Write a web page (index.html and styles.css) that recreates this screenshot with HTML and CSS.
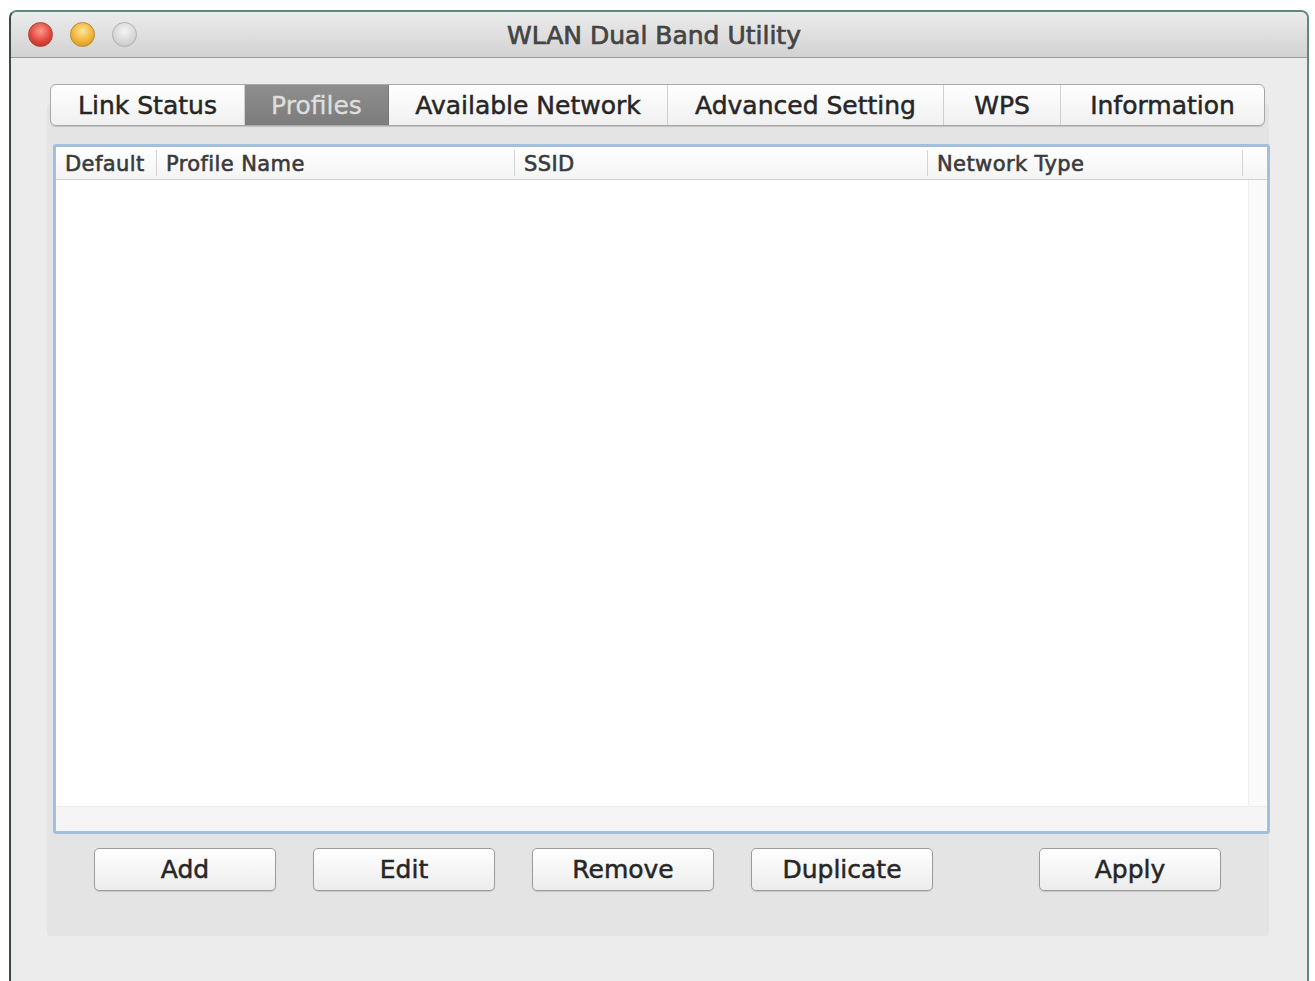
FILE: index.html
```html
<!DOCTYPE html>
<html lang="en">

<head>
    <meta charset="UTF-8">
    <title>WLAN Dual Band Utility</title>
    <link rel="stylesheet" href="styles.css">
</head>

<body>
    <div class="window">
        <div class="titlebar">
            <div class="lights">
                <span class="light red"></span>
                <span class="light yellow"></span>
                <span class="light gray"></span>
            </div>
            <div class="title">WLAN Dual Band Utility</div>
        </div>

        <div class="content">
            <div class="tabs">
                <div class="tab t1">Link Status</div>
                <div class="tab t2 active">Profiles</div>
                <div class="tab t3">Available Network</div>
                <div class="tab t4">Advanced Setting</div>
                <div class="tab t5">WPS</div>
                <div class="tab t6">Information</div>
            </div>

            <div class="panel">
                <div class="table">
                    <div class="thead">
                        <div class="th c1">Default</div>
                        <div class="th c2">Profile Name</div>
                        <div class="th c3">SSID</div>
                        <div class="th c4">Network Type</div>
                        <div class="th c5"></div>
                    </div>
                    <div class="tbody">
                        <div class="rows"></div>
                        <div class="vscroll"></div>
                    </div>
                    <div class="hscroll"></div>
                </div>

                <div class="actions">
                    <button class="btn">Add</button>
                    <button class="btn">Edit</button>
                    <button class="btn">Remove</button>
                    <button class="btn">Duplicate</button>
                    <button class="btn apply">Apply</button>
                </div>
            </div>
        </div>
    </div>
</body>

</html>
```

FILE: styles.css
```css
* {
    margin: 0;
    padding: 0;
    box-sizing: border-box;
}

body {
    background-color: #ffffff;
    font-family: "DejaVu Sans", "Liberation Sans", sans-serif;
    color: #333333;
}

.window {
    margin: 10px 0 0 9px;
    width: 1300px;
    height: 972px;
    border: 2px solid #5e8a78;
    border-left-color: #3a4a44;
    border-bottom: none;
    border-radius: 8px 8px 0 0;
    background-color: #ececec;
    display: flex;
    flex-direction: column;
    overflow: hidden;
}

.titlebar {
    height: 46px;
    background: linear-gradient(#ececec, #d2d2d2);
    border-bottom: 1px solid #9a9a9a;
    display: flex;
    align-items: center;
}

.lights {
    display: flex;
    gap: 17px;
    padding-left: 17px;
    width: 200px;
}

.light {
    width: 25px;
    height: 25px;
    border-radius: 50%;
    display: inline-block;
}

.red {
    background: radial-gradient(circle at 50% 35%, #ff9a90, #e0463c 55%, #b02a22);
    border: 1px solid #a8443c;
}

.yellow {
    background: radial-gradient(circle at 50% 35%, #ffe79a, #f0b43a 55%, #c88a1c);
    border: 1px solid #b98a30;
}

.gray {
    background: radial-gradient(circle at 50% 35%, #f4f4f4, #d6d6d6 60%, #bdbdbd);
    border: 1px solid #b0b0b0;
}

.title {
    flex: 1;
    text-align: center;
    font-size: 25px;
    color: #444444;
    -webkit-text-stroke: 0.7px #444444;
    padding-right: 210px;
    padding-top: 2px;
}

.content {
    flex: 1;
    padding: 26px 38px 0 36px;
    display: flex;
    flex-direction: column;
}

.tabs {
    display: flex;
    height: 42px;
    margin-left: 3px;
    margin-right: 4px;
    margin-bottom: -22px;
    background: linear-gradient(#ffffff, #f0f0f0);
    border: 1px solid #a8a8a8;
    border-radius: 6px;
    box-shadow: 0 1px 1px rgba(0, 0, 0, 0.15);
    position: relative;
    z-index: 1;
    overflow: hidden;
}

.tab {
    display: flex;
    align-items: center;
    justify-content: center;
    font-size: 25px;
    color: #262626;
    -webkit-text-stroke: 0.5px #262626;
    border-right: 1px solid #d0d0d0;
}

.tab:last-child {
    border-right: none;
}

.t1 { width: 194px; }
.t2 { width: 144px; }
.t3 { width: 279px; }
.t4 { width: 276px; }
.t5 { width: 117px; }
.t6 { flex: 1; }

.tab.active {
    background: linear-gradient(#8e8e8e, #7c7c7c);
    color: #dedede;
    -webkit-text-stroke: 0.3px #dedede;
    border-right-color: #777777;
}

.panel {
    height: 832px;
    background-color: #e4e4e4;
    border-radius: 4px;
    padding: 40px 0 0 6px;
    display: flex;
    flex-direction: column;
}

.table {
    width: 1217px;
    height: 690px;
    border: 3px solid #a3bfdc;
    border-radius: 3px;
    background-color: #ffffff;
    display: flex;
    flex-direction: column;
}

.thead {
    display: flex;
    height: 33px;
    border-bottom: 1px solid #cfcfcf;
    background: linear-gradient(#ffffff, #f4f4f4);
}

.th {
    font-size: 21px;
    letter-spacing: 0.4px;
    color: #3a3a3a;
    -webkit-text-stroke: 0.6px #3a3a3a;
    padding: 2px 0 0 9px;
    border-right: 1px solid #d4d4d4;
    display: flex;
    align-items: center;
    margin: 3px 0;
}

.c1 { width: 101px; }
.c2 { width: 358px; }
.c3 { width: 413px; }
.c4 { width: 315px; }
.c5 { flex: 1; border-right: none; }

.tbody {
    flex: 1;
    display: flex;
}

.rows {
    flex: 1;
}

.vscroll {
    width: 19px;
    background-color: #fafafa;
    border-left: 1px solid #efefef;
}

.hscroll {
    height: 25px;
    background-color: #f5f5f5;
    border-top: 1px solid #ececec;
}

.actions {
    display: flex;
    padding: 14px 0 0 41px;
}

.btn {
    width: 182px;
    height: 43px;
    margin-right: 37px;
    font-family: "DejaVu Sans", "Liberation Sans", sans-serif;
    font-size: 25px;
    color: #262626;
    -webkit-text-stroke: 0.5px #262626;
    background: linear-gradient(#ffffff, #ececec);
    border: 1px solid #9c9c9c;
    border-radius: 5px;
    box-shadow: 0 1px 1px rgba(0, 0, 0, 0.12);
}

.btn.apply {
    margin-left: 69px;
}
```
